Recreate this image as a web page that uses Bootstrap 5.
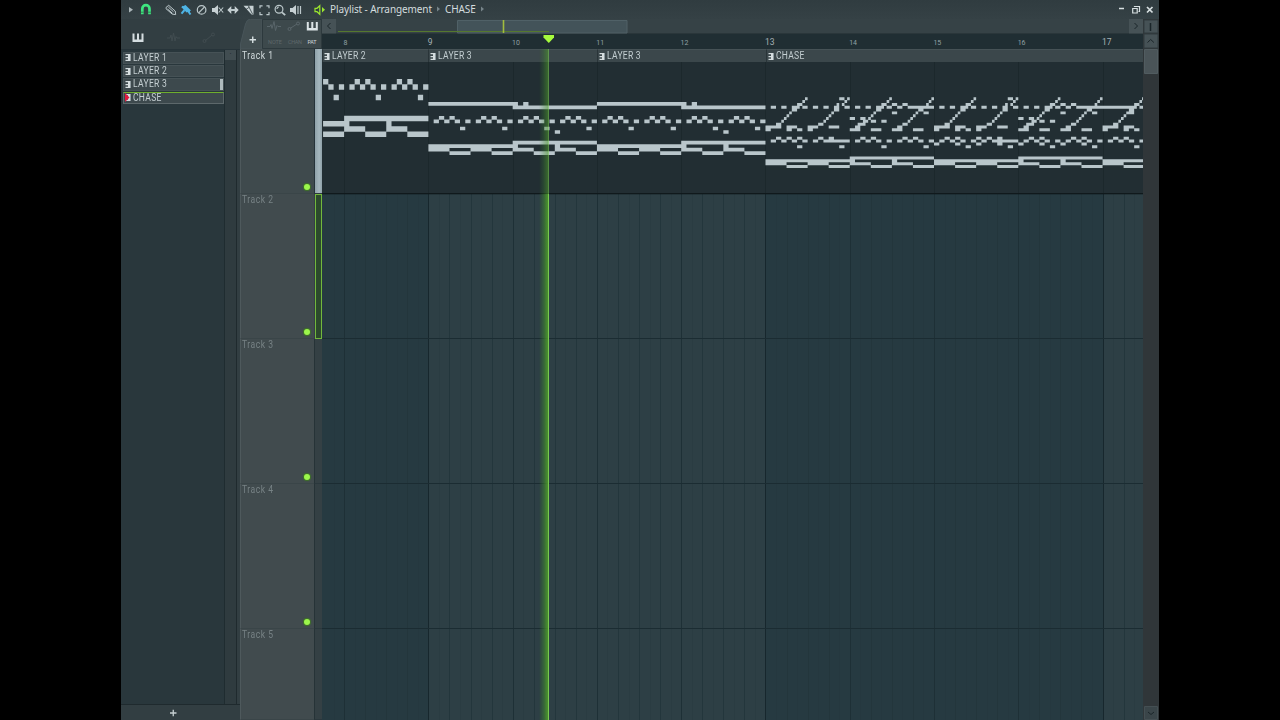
<!DOCTYPE html>
<html lang="en">
<head>
<meta charset="utf-8">
<title>Playlist - Arrangement</title>
<link href="https://cdn.jsdelivr.net/npm/bootstrap@5.3.0/dist/css/bootstrap.min.css" rel="stylesheet">
<style>
  body { background:#000; width:1280px; height:720px; overflow:hidden; font-family:"Roboto",sans-serif; line-height:1; }
  svg { display:block; flex-shrink:0; }
  .daw { width:1038px; height:720px; margin-left:121px; background:#344044; color:#cfd8da; }
  .titlebar { height:19px; background:linear-gradient(#303c40,#354145); font-family:"Noto Sans",sans-serif; font-size:10px; color:#d3dcde; }
  .winname { margin:-1px 0 0 4px; gap:5px; letter-spacing:-.1px; }
  .narrow { display:inline-block; transform:scaleX(.84); transform-origin:0 50%; white-space:nowrap; }
  .sidebar { width:119px; background:#323e42; }
  .sidetabs { height:30px; }
  .patlist { width:104px; background:#29373c; border-right:1px solid #1f2c30; }
  .pats { height:656px; border-bottom:1px solid #1f2a2e; border-top:1px solid #27343a; }
  .pat { height:12.4px; margin:1px 0 0 2px; padding-left:1px; background:#3d494d; border:1px solid #465256; font-size:10.2px; color:#c5cfd2; letter-spacing:.35px; }
  .pat:first-child { margin-top:1.5px; }
  .pat.sel { border-color:#6fae2d #5d686b #5d686b; }
  .pat .vol { width:3px; background:#aebabd; }
  .patscroll { width:12px; background:#2f3b3f; border-right:1px solid #1f2a2e; }
  .knob { height:10px; background:#414d51; color:#1b2529; font-size:8px; text-align:center; line-height:8px; }
  .heads { width:74px; z-index:1; }
  .headtop { height:30px; width:82px; }
  .thead { height:145px; background:#414b4e; border-left:1px solid #4e595c; border-bottom:1px solid #3a4548; color:#778285; font-size:10.2px; padding:1px 0 0 1px; letter-spacing:.6px; }
  .thead.on { color:#d2dbdd; background:#3f4a4d; padding-top:2px; }
  .led { width:6px; height:6px; border-radius:50%; background:#9cf64c; box-shadow:0 0 1px 1px #3f7426; margin:0 4px 3px auto; }
  .strip { width:8px; padding-top:30px; background:#344044; }
  .seg { height:145px; border-bottom:1px solid #2b383d; border-left:1px solid #263337; }
  .seg.lit { background:linear-gradient(90deg,#8fa1a9,#a5b7be 60%,#8fa1a9); border-left:1px solid #26333a; }
  .seg.focus { border:1px solid #72b83c; background:#2c4a2c; margin-left:1px; width:7px; }
  .navrow { height:15px; background:#364246; }
  .arrowbox { width:14px; height:14px; background:#465256; }
  .ruler { height:15px; background:#202e33; color:#90a0a4; font-size:7px; }
  .ruler span { position:absolute; top:6px; }
  .ruler .big { font-size:8.5px; top:4px; color:#a5b1b4; }
  .marker { left:221px; top:0; }
  .lanes { width:821px; height:671px; overflow:hidden; }
  .cliptitle { height:13px; background:#3b474b; border-left:1px solid #2a3539; border-top:1px solid #465256; font-size:10.2px; color:#c3ced1; padding-left:1px; letter-spacing:.3px; }
  .playhead { left:217px; top:0; width:10px; height:671px; background:linear-gradient(90deg,#3f8b2d00,#3f8b2d66 40%,#4c9a2bdd 85%,#7fd455 86%,#74c250); -webkit-mask-image:linear-gradient(#0009 145px,#000 145px); mask-image:linear-gradient(#0009 145px,#000 145px); }
  .vscroll { width:16px; background:#303639; }
</style>
</head>
<body>
<div class="daw d-flex flex-column position-relative">
  <header class="titlebar d-flex align-items-center flex-shrink-0">
    <svg width="205" height="19" viewBox="121 0 205 19" fill="none" stroke="#bcc8cb" stroke-width="1.2">
      <path d="M129 7l4 2.800-4 2.800z" fill="#aab5b8" stroke="none"/>
      <path d="M142.300 14.200V8.800a3.600 3.600 0 0 1 7.200 0v5.400" stroke="#3ee57f" stroke-width="2.700"/>
      <path d="M141 12.200h2.700m4.400 0h2.800" stroke="#2c6b48" stroke-width=".8"/>
      <path d="M166 7.500l2.700-2.200 6.500 5.700.5 3.600-3.500-.5-6.200-5.400zM168.300 7l5.200 4.800M167.500 9l5 4.400" stroke-width="1"/>
      <path d="M181.500 7l4-2 5.500 5.500-4.500 2z" fill="#4eb3e4" stroke="none"/><path d="M184.500 10l-3 3.700m6.500-2.700l2.500 3.500m-8.500-8l3 2.500m2 2l3 .5" stroke="#4eb3e4" stroke-width="2"/>
      <circle cx="201.600" cy="9.900" r="4.300"/><path d="M198.700 12.800l5.800-5.800"/>
      <path d="M212 8h2.500l3.500-3v10l-3.500-3H212z" fill="#c7d1d4" stroke="none"/><path d="M218.700 7.500l4.500 5m0-5l-4.500 5" stroke-width="1.100"/>
      <path d="M227.300 10l4-4v8zM238.700 10l-4-4v8z" fill="#c7d1d4" stroke="none"/><path d="M230 10h6" stroke-width="2"/>
      <path d="M243.500 5.800h10v8.700h-2z" fill="#c7d1d4" stroke="none"/><path d="M248.200 5.500l4.300 8.500M246 9.500l3.500-2.500" stroke="#344044" stroke-width=".8"/>
      <path d="M260 8.200V5.800h2.600m3.800 0h2.600v2.400m0 3.800v2.600h-2.600m-3.800 0H260V12"/>
      <circle cx="279" cy="9.300" r="3.900"/><path d="M282 12.300l3.200 2.900" stroke-width="1.800"/><path d="M277 9a2 2 0 0 1 2-2"/>
      <path d="M290 8h2.500l3.500-3v10l-3.500-3H290z" fill="#c7d1d4" stroke="none"/><path d="M298 6v8m2.500-8v8"/>
      <path d="M315 8.300h2l2.800-2.600v8.600l-2.800-2.600h-2z" stroke="#9be62f"/><path d="M322 7l3 2.800-3 2.800z" fill="#9be62f" stroke="none"/>
    </svg>
    <div class="winname d-flex align-items-center">
      <span>Playlist - Arrangement</span>
      <svg width="3" height="6"><path d="M0 .5L3 3 0 5.500z" fill="#77858a"/></svg>
      <span>CHASE</span>
      <svg width="3" height="6"><path d="M0 .5L3 3 0 5.500z" fill="#77858a"/></svg>
    </div>
    <svg class="ms-auto me-1" width="38" height="19" viewBox="1117 0 38 19" fill="none" stroke="#d8e0e2" stroke-width="1.200">
      <path d="M1119 8.500h5" stroke-width="1.500"/><path d="M1134.500 7V6.500h5v5h-1"/><path d="M1132.700 8.500h4.500v4.500h-4.500z"/><path d="M1147 7l5.500 5.500m0-5.500l-5.500 5.500" stroke-width="1.700"/>
    </svg>
  </header>

  <main class="d-flex flex-grow-1">
    <aside class="sidebar flex-shrink-0">
      <svg class="sidetabs" width="119" height="30" viewBox="121 19 119 30" fill="none" stroke="#414c50">
        <path d="M132.500 33.500h2v6h2.500v-6h2v6h2.500v-6h2v8.500h-11z" fill="#d5dde0" stroke="none"/>
        <path d="M167 38h3l1-3 1 6 1.500-8 1.500 8 1-4.500 1 1.500h3"/>
        <path d="M205 41l7-6" /><circle cx="204.500" cy="41" r="1.500"/><circle cx="213" cy="34.500" r="1.500"/>
      </svg>
      <div class="d-flex pats">
        <div class="patlist" id="patterns"></div>
        <div class="patscroll"><div class="knob">·</div></div>
      </div>
      <svg width="119" height="15" viewBox="0 0 119 15"><path d="M49 8h6.500M52.250 4.800v6.500" stroke="#c6d0d2" stroke-width="1.300"/></svg>
    </aside>

    <section class="heads flex-shrink-0 position-relative">
      <svg class="headtop" width="82" height="30" viewBox="240 19 82 30" fill="none">
        <path d="M240.500 49V44l5-20q1.500-5 5-5H262v30z" fill="#424e51" stroke="#48555a"/>
        <path d="M262.500 19.500h59v29h-59z" fill="#3d494c" stroke="#2d393d"/>
        <path d="M249.500 39.700h6.500m-3.250-3.200v6.500" stroke="#d6dfe1" stroke-width="1.400"/>
        <path d="M267 26.500h3l1-2 1 4 2-7 1.500 9 1.500-5 1 1h3M290 28.500l7-4.500" stroke="#59656a"/><g stroke="#59656a"><circle cx="289.500" cy="29" r="1.500"/><circle cx="298" cy="23.500" r="1.500"/></g>
        <path d="M306.800 22h2v6h2.500v-6h2v6h2.500v-6h2v8.500h-11z" fill="#dce4e6"/>
        <g fill="#5d686b" font-family="Roboto, sans-serif" font-size="5.500"><text x="268" y="44" textLength="14">NOTE</text><text x="288" y="44" textLength="14">CHAN</text><text x="307.500" y="44" fill="#cdd6d8" textLength="9">PAT</text></g>
      </svg>
      <div id="heads"></div>
    </section>

    <div class="strip flex-shrink-0" id="strip"></div>

    <section class="flex-shrink-0" style="width:821px">
      <div class="navrow d-flex">
        <div class="arrowbox d-flex align-items-center justify-content-center"><svg width="6" height="8" fill="none" stroke="#1a2529"><path d="M4.500 1L1.500 4l3 3"/></svg></div>
        <svg width="793" height="15" viewBox="336 19 793 15">
          <path d="M336 33.500h793" stroke="#2a363a"/>
          <path d="M457.500 20.500h169.500v12.500H457.500z" fill="#435359" stroke="#506167"/>
          <path d="M338 31.500h211" stroke="#55782e"/><path d="M503.500 20v13" stroke="#a2bd3e" stroke-width="1.600"/>
        </svg>
        <div class="arrowbox d-flex align-items-center justify-content-center"><svg width="6" height="8" fill="none" stroke="#1a2529"><path d="M1.500 1l3 3-3 3"/></svg></div>
      </div>
      <div class="ruler position-relative" id="ruler">
        <svg class="marker position-absolute" width="12" height="10"><path d="M.5 1h10.500v2.500L5.800 9 .5 3.500z" fill="#a6fb3d"/></svg>
      </div>
      <div class="lanes position-relative">
        <svg width="821" height="671" viewBox="322 49 821 671" id="grid"></svg>
        <div class="position-absolute top-0 start-0 d-flex w-100" id="clips"></div>
        <div class="playhead position-absolute"></div>
      </div>
    </section>

    <aside class="vscroll">
      <svg width="16" height="701" viewBox="1143 19 16 701" fill="none" stroke="#1a2529">
        <path d="M1144 20h14v13h-14zM1144 34h14v14h-14z" fill="#465256" stroke="#303b3f"/>
        <path d="M1144.500 49.500h13v24h-13z" fill="#4a5458" stroke="#515c60"/>
        <path d="M1144.500 706.500h13v13h-13z" fill="#3a4549" stroke="#444f53"/>
        <path d="M1150.500 23v8" stroke-width="1.500"/><path d="M1147.500 42.500l3.200-3 3.200 3M1148 712l3 2.500 3-2.500"/>
      </svg>
    </aside>
  </main>
</div>

<script>
const glyph = (red) => `<svg width="7.500" height="9" viewBox="0 0 7.500 9"><path d="M.5 1h5.500v7H.5V6.800h2.500V5.200H.5V3.900h2.500V2.200H.5z" fill="#d6dee0"/><path d="M5.500 1v7" stroke="#8f9ba0"/>${red ? '<path d="M0 0l4.500 4.500L0 9z" fill="#e0183e"/>' : ''}</svg>`;

/* pattern picker */
document.getElementById('patterns').innerHTML = ['LAYER 1','LAYER 2','LAYER 3','CHASE'].map((n,i) =>
  `<div class="pat d-flex align-items-center${i==3?' sel':''}">${glyph(i==3)}<span class="narrow">${n}</span>${i==2?'<b class="vol ms-auto h-100"></b>':''}</div>`).join('');

/* track headers and colour strip */
document.getElementById('heads').innerHTML = [1,2,3,4,5].map(n =>
  `<div class="thead d-flex flex-column justify-content-between${n==1?' on':''}" style="height:${n==5?91:145}px"><span class="narrow">Track ${n}</span>${n<5?'<div class="led"></div>':''}</div>`).join('');
document.getElementById('strip').innerHTML = ['lit','focus','','',''].map((c,i) =>
  `<div class="seg ${c}" style="height:${i==4?91:145}px"></div>`).join('');

/* time ruler */
const BAR = 84.27, X9 = 428.4, barX = b => X9 + (b-9)*BAR;
let r = '';
for (let b=8;b<=17;b++) { const big=(b-9)%4===0; r += `<span class="${big?'big':''}" style="left:${barX(b)-322-.6}px">${b}</span>`; }
document.getElementById('ruler').insertAdjacentHTML('beforeend', r);

/* clip title strips */
document.getElementById('clips').innerHTML = [['LAYER 2',106],['LAYER 3',169],['LAYER 3',169],['CHASE',377]].map(c =>
  `<div class="cliptitle d-flex align-items-center flex-shrink-0" style="width:${c[1]}px">${glyph()}<span class="narrow">${c[0]}</span></div>`).join('');

/* grid background */
let g = '';
const rect = (x,y,w,h,f) => `<rect x="${x}" y="${y}" width="${w}" height="${h}" fill="${f}"/>`;
g += rect(322,49,821,671,'#2d3f45') + rect(322,49,106,671,'#263a41') + rect(766,49,337,671,'#263a41');
for (let b=0;b<40;b++) {
  const x = Math.round(barX(8)+b*BAR/4); if (x>1142) break;
  const bar=b%4===0, four=(b-4)%16===0;
  g += rect(x,194,1,526, four?'#17272d':bar?'#1e3036':'#23363c');
}
for (let i=-1;i<38;i++) g += rect(Math.round(barX(8)+(i+.5)*BAR/4),194,1,526,'#24363c55');
for (const y of [338,483,628]) g += rect(322,y,821,1,'#1b2c32');
g += rect(322,49,821,144,'#222e33') + rect(322,193,821,1.3,'#10191c');
for (let b=8;b<18;b++) g += rect(Math.round(barX(b)),62,1,131,'#1c282c');

/* notes, given as row and a span of sixteenth steps */
let d = '';
const S = BAR/16;
function lay(x0,y0,rh) { return (row,a,b) => {
  const x=Math.min(1143,x0+a*S), e=Math.min(1143,x0+b*S); if (e>x) d += `M${x.toFixed(2)} ${(y0+row*rh).toFixed(2)}H${e.toFixed(2)}v${(rh+.15).toFixed(2)}H${x.toFixed(2)}z`; }; }

const l2 = lay(barX(8),79,5.25);
[[-4,0],[-3,1],[-2,3],[-1,1],[1,1],[2,0],[3,1],[4,0],[5,1],[6,3],[7,1],[9,1],[10,0],[11,1],[12,0],[13,1],[14,3],[15,1]].forEach(([s,q]) => l2(q,s,s+1));
[[7,0,16],[8,-4,1],[8,8,9],[9,0,4],[9,8,12],[10,-4,0],[10,4,8],[10,12,16]].forEach(a => l2(...a));

for (const start of [9,11]) {
  const m = lay(barX(start),102,3.52);
  m(0,0,17); m(1,16,32); m(0,18,19);
  for (let k=0;k<4;k++) { [[1,5],[2,4],[3,5],[4,4],[5,5],[6,7],[7,5]].forEach(([s,q]) => m(q,k*8+s,k*8+s+1)); }
  m(8,24,25);
  [[12,0,16],[13,0,4],[13,8,12],[14,4,8],[14,12,16],[11,16,32],[12,16,17],[12,24,25],[13,16,20],[13,24,28],[14,20,24],[14,28,32]].forEach(a => m(...a));
}

const c = lay(barX(13),97.3,2.82);
/* rising runs, in half steps */
const runs = [
 [0,15,16],[1,14,15],[2,12,14],[3,11,13],[4,10,12],[5,9,10],[6,8,9],[7,7,8],[8,6,7],[9,4,6],[10,0,6],[11,0,2],[10,8,12],[11,8,10],[11,12,14],
 [0,28,30],[0,31,32],[1,30,31],[2,27,28],[2,29,30],[3,26,28],[4,26,28],[5,25,26],[6,24,25],[7,23,24],[8,22,23],[9,20,22],[10,16,20],[11,16,18],[10,24,28],
 [0,47,48],[1,46,47],[2,44,46],[2,48,50],[2,52,54],[3,43,45],[4,42,44],[5,41,42],[5,48,50],[6,40,41],[7,32,34],[7,36,38],[7,39,40],[8,37,39],[8,40,42],[8,44,46],[9,35,38],[10,34,36],[11,32,36],[11,40,44],
 [0,63,64],[1,62,63],[2,61,62],[4,58,60],[5,57,58],[5,60,62],[6,56,57],[7,55,56],[8,54,55],[9,52,54],[10,50,52],[11,48,52],[11,56,60]];
for (const o of [0,64,128]) runs.forEach(([q,a,b]) => c(q,(a+o)/2,(b+o)/2));
c(5,69,70); c(3,68,69);
[1,3,5,7,9,11,13,15,17,19,21,23,25].forEach(s => { c(3,s,s+1); c(3,s+32,s+33); });
c(3,27,32); c(3,59,68); c(3,69,70); c(3,71,72);
/* middle figure */
[1,3,5,7,9,11,12,13,14,15,17,19,21,23,25,27,29,31,33,35,37,39,41,43,44,45,46,47,49,51,53,55,57,59,61,63,65,67,69,71].forEach(s => c(15,s,s+1));
[2,4,6,10,12,18,20,26,28,34,36,40,42,44,50,52,58,60,66,68].forEach(s => c(14,s,s+1));
[6,14,22,30,38,46,54,62,70].forEach(s => c(17,s,s+1));
[32,36,40,44,48,52,56,60].forEach(s => c(16,s,s+1));
/* bass */
for (const o of [0,32,64]) [[22,0,16],[23,0,4],[23,8,12],[24,4,8],[24,12,16],[21,16,32],[22,16,17],[22,24,25],[23,16,20],[23,24,28],[24,20,24],[24,28,32]].forEach(([q,a,b]) => c(q,a+o,b+o));

g += `<path d="${d}" fill="#b9c6cb"/>`;
document.getElementById('grid').innerHTML = g;
</script>
<script src="https://cdn.jsdelivr.net/npm/bootstrap@5.3.0/dist/js/bootstrap.bundle.min.js"></script>
</body>
</html>
